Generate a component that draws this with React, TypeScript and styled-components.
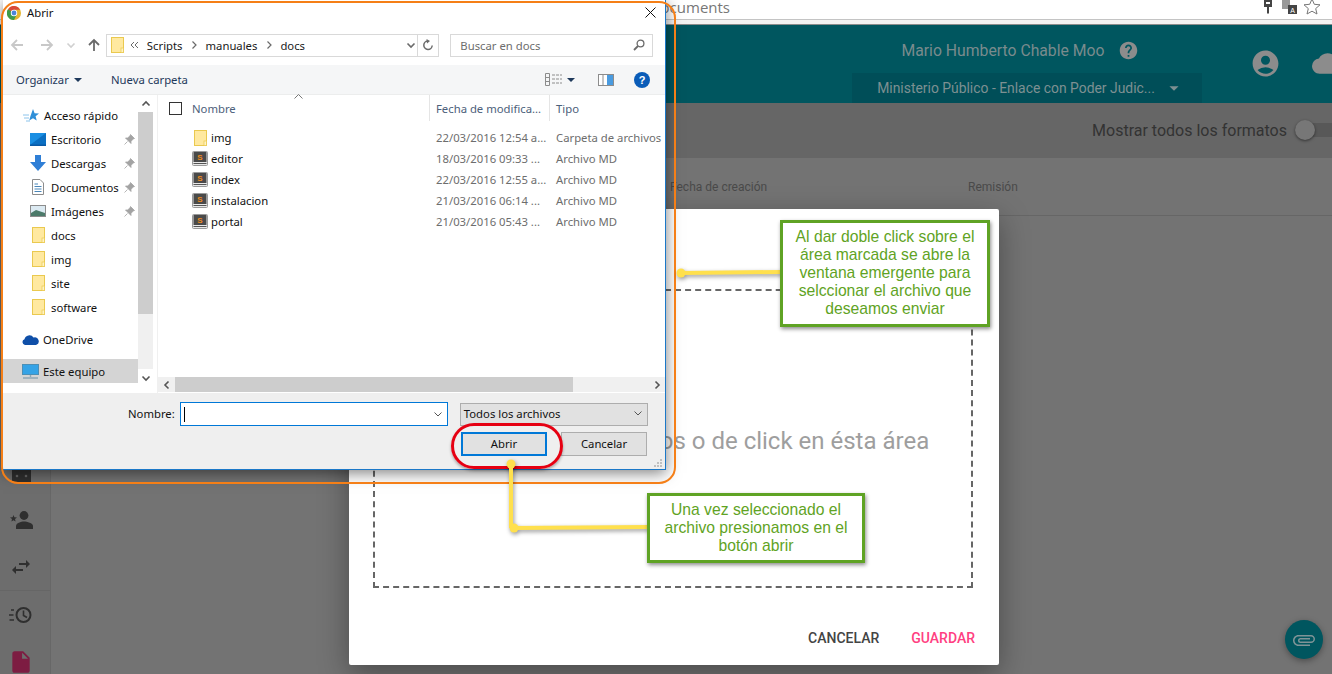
import styled, { createGlobalStyle } from "styled-components";
import {
  MdAccountCircle,
  MdArrowDropDown,
  MdAttachFile,
  MdCloud,
  MdHelp,
  MdInsertDriveFile,
  MdSwapHoriz,
} from "react-icons/md";

const GlobalStyle = createGlobalStyle`
  html, body { margin: 0; padding: 0; background: #737373; }
  * { box-sizing: border-box; }
`;

const Page = styled.div`
  position: relative;
  width: 1332px;
  height: 674px;
  overflow: hidden;
  display: flex;
  flex-direction: column;
  font-family: Roboto, sans-serif;
  background: #737373;
`;

/* browser chrome behind everything */
const BrowserBar = styled.div`
  height: 25px;
  flex: none;
  background: #f2f2f2;
  border-bottom: 1px solid #8c8c8c;
`;
const AddressBox = styled.div`
  height: 20px;
  background: #fff;
  border-bottom: 1px solid #c4c4c4;
  display: flex;
  align-items: center;
  padding-right: 11px;
`;
const AddressText = styled.span`
  width: 730px;
  text-align: right;
  font: 15px "Open Sans", sans-serif;
  color: #777;
  margin-top: -6px;
  white-space: nowrap;
`;
const AddressIcons = styled.div`
  margin-left: auto;
  display: flex;
  align-items: center;
  gap: 6px;
  margin-top: -6px;
`;
const KeyIcon = styled.svg`
  margin-right: 3px;
`;

const AppHeader = styled.header`
  height: 78px;
  flex: none;
  background: #00565f;
  display: flex;
  justify-content: flex-end;
  overflow: hidden;
`;
const UserBlock = styled.div`
  width: 350px;
  display: flex;
  flex-direction: column;
  align-items: center;
`;
const UserName = styled.div`
  height: 48px;
  padding: 3px 14px 0 0;
  display: flex;
  align-items: center;
  gap: 13px;
  font-size: 15.75px;
  color: #7a8b8d;
`;
const RoleSelect = styled.div`
  width: 350px;
  height: 30px;
  padding-left: 8px;
  background: #004e58;
  display: flex;
  align-items: center;
  justify-content: center;
  gap: 8px;
  font-size: 13.9px;
  color: #7d9092;
`;
const HeaderIcons = styled.div`
  width: 130px;
  padding: 23px 0 0 48px;
  display: flex;
  gap: 31px;
  color: #8c8c8c;
  flex: none;
  svg {
    flex: none;
  }
`;

const Toolbar = styled.div`
  height: 55px;
  flex: none;
  background: #666;
  display: flex;
  align-items: center;
  justify-content: flex-end;
  gap: 8px;
  font-size: 16px;
  color: #333;
`;
const Toggle = styled.div`
  position: relative;
  width: 37px;
  height: 14px;
  margin-top: -2px;
  border-radius: 7px 0 0 7px;
  background: #585858;
`;
const ToggleKnob = styled.span`
  position: absolute;
  left: 0;
  top: -3px;
  width: 20px;
  height: 20px;
  border-radius: 50%;
  background: #777;
  box-shadow: 0 1px 3px rgba(0, 0, 0, 0.5);
`;

const Body = styled.div`
  flex: 1;
  display: flex;
  min-height: 0;
`;
const SideRail = styled.nav`
  width: 51px;
  flex: none;
  background: #6d6d6d;
  border-right: 1px solid #676767;
  padding: 291px 8px 0 0;
  display: flex;
  flex-direction: column;
  color: #2f2f2f;
`;
const RailItem = styled.div<{ $color?: string }>`
  height: 47px;
  flex: none;
  display: flex;
  align-items: center;
  justify-content: center;
  color: ${(p) => p.$color || "#2f2f2f"};
`;
const RailDivider = styled.div`
  height: 1px;
  flex: none;
  margin-right: -8px;
  background: #666;
`;
const Content = styled.main`
  flex: 1;
`;
const TableHead = styled.div`
  height: 58px;
  background: #737373;
  border-bottom: 1px solid #666;
  display: grid;
  grid-template-columns: 298px 1fr;
  padding-left: 619px;
  align-items: center;
  font-size: 12px;
  color: #4a4a4a;
`;

/* upload modal */
const Modal = styled.section`
  position: absolute;
  left: 349px;
  top: 209px;
  width: 650px;
  height: 456px;
  background: #fff;
  border-radius: 2px;
  box-shadow: 0 10px 30px rgba(0, 0, 0, 0.35);
  padding: 80px 26px 0 24px;
  display: flex;
  flex-direction: column;
`;
const DropZone = styled.div`
  height: 299px;
  border: 2px dashed #666;
  display: flex;
  align-items: center;
  justify-content: center;
  font-size: 24px;
  color: #9e9e9e;
  padding: 4px 0 0 0;
  white-space: nowrap;
`;
const ModalFooter = styled.div`
  flex: 1;
  display: flex;
  justify-content: flex-end;
  align-items: center;
  gap: 32px;
  padding-top: 23px;
  margin-right: -2px;
  font-size: 14px;
  font-weight: 500;
`;
const FlatButton = styled.span<{ $color: string }>`
  color: ${(p) => p.$color};
`;
const Fab = styled.div`
  position: absolute;
  left: 1285px;
  top: 620px;
  width: 38px;
  height: 39px;
  border-radius: 50%;
  background: #00565f;
  box-shadow: 0 2px 6px rgba(0, 0, 0, 0.35);
  display: flex;
  align-items: center;
  justify-content: center;
  color: #7f9497;
`;

/* native file dialog */
const Dialog = styled.div`
  position: absolute;
  left: 3px;
  top: 0;
  width: 663px;
  height: 470px;
  background: #fff;
  border-right: 1px solid #1b78c8;
  border-bottom: 1px solid #1b78c8;
  box-shadow: 0 3px 14px rgba(0, 0, 0, 0.5);
  display: flex;
  flex-direction: column;
  font-family: "Noto Sans", sans-serif;
  font-size: 11.3px;
  color: #111;
`;
const TitleRow = styled.div`
  height: 25px;
  flex: none;
  display: flex;
  align-items: center;
  padding: 0 9px 0 4px;
  gap: 6px;
`;
const TitleClose = styled.div`
  margin-left: auto;
  display: flex;
`;
const NavRow = styled.div`
  height: 40px;
  flex: none;
  display: flex;
  align-items: center;
  padding: 0 12px 0 7px;
`;
const NavButtons = styled.div`
  width: 96px;
  display: flex;
  align-items: center;
  color: #c8c8c8;
`;
const NavSpace = styled.span<{ $w: number }>`
  width: ${(p) => p.$w}px;
`;
const Field = styled.div`
  height: 23px;
  border: 1px solid #d9d9d9;
  display: flex;
  align-items: center;
`;
const PathField = styled(Field)`
  width: 334px;
  padding-left: 4px;
`;
const Crumb = styled.span`
  color: #1a1a1a;
`;
const CrumbSep = styled.span`
  width: 23px;
  display: flex;
  justify-content: center;
`;
const PathTail = styled.div`
  margin-left: auto;
  width: 34px;
  height: 100%;
  display: flex;
  align-items: center;
`;
const TailDrop = styled.div`
  width: 13px;
  display: flex;
  justify-content: center;
`;
const TailRefresh = styled.div`
  flex: 1;
  height: 100%;
  border-left: 1px solid #d9d9d9;
  display: flex;
  align-items: center;
  justify-content: center;
`;
const SearchField = styled(Field)`
  width: 203px;
  margin-left: 11px;
  padding: 0 7px 0 9px;
  justify-content: space-between;
  color: #6d6d6d;
`;
const CommandRow = styled.div`
  height: 30px;
  flex: none;
  background: #f5f6f7;
  display: flex;
  align-items: center;
  padding: 0 15px 0 13px;
  color: #1e395b;
  border-bottom: 1px solid #eceded;
`;
const Organize = styled.span`
  width: 95px;
  display: flex;
  align-items: center;
  gap: 5px;
`;
const CommandIcons = styled.div`
  margin-left: auto;
  display: flex;
  align-items: center;
`;
const PaneToggle = styled.svg`
  margin-left: 14px;
`;
const HelpBadge = styled.svg`
  margin-left: 20px;
`;
const Caret = styled.span<{ $gap: number }>`
  width: 0;
  height: 0;
  border-left: 4px solid transparent;
  border-right: 4px solid transparent;
  border-top: 4px solid #1e395b;
  margin: 0 ${(p) => p.$gap}px 0 ${(p) => p.$gap - 4}px;
`;
const Panes = styled.div`
  height: 298px;
  flex: none;
  display: flex;
`;
const NavPane = styled.div`
  width: 135px;
  flex: none;
  padding-top: 8px;
  display: flex;
  flex-direction: column;
`;
const NavItem = styled.div<{ $indent: number; $top?: number; $active?: boolean }>`
  height: 24px;
  flex: none;
  margin-top: ${(p) => p.$top || 0}px;
  padding-left: ${(p) => p.$indent}px;
  display: flex;
  align-items: center;
  gap: 4px;
  background: ${(p) => (p.$active ? "#d4d4d4" : "transparent")};
`;
const NavIcon = styled.span`
  width: 18px;
  height: 18px;
  flex: none;
  display: flex;
  align-items: center;
  justify-content: center;
`;
const Pin = styled.span`
  margin-left: auto;
  margin-right: 3px;
  display: flex;
`;
const ScrollY = styled.div`
  width: 15px;
  flex: none;
  background: #f0f0f0;
  display: flex;
  flex-direction: column;
  margin-bottom: 7px;
`;
const ScrollBtn = styled.div`
  height: 17px;
  flex: none;
  display: flex;
  align-items: center;
  justify-content: center;
  background: #fff;
`;
const ScrollThumbY = styled.div`
  height: 202px;
  background: #cdcdcd;
`;
const ScrollSpace = styled.div`
  flex: 1;
`;
const FilePane = styled.div`
  flex: 1;
  min-width: 0;
  margin-left: 4px;
  border-left: 1px solid #f0f0f0;
  display: flex;
  flex-direction: column;
`;
const Grid = styled.div`
  display: grid;
  grid-template-columns: 271px 120px 1fr;
`;
const ColHead = styled(Grid)`
  height: 26px;
  flex: none;
  align-items: center;
  color: #4c607a;
`;
const HeadCell = styled.div<{ $sep?: boolean }>`
  position: relative;
  height: 26px;
  display: flex;
  align-items: center;
  padding-left: ${(p) => (p.$sep ? 6 : 11)}px;
  border-left: ${(p) => (p.$sep ? "1px solid #e5e5e5" : "0")};
  gap: 10px;
`;
const Check = styled.span`
  width: 13px;
  height: 13px;
  border: 1px solid #333;
  background: #fff;
`;
const SortMark = styled.span`
  position: absolute;
  left: 136px;
  top: -1px;
  display: flex;
`;
const FileRows = styled.div`
  flex: 1;
  padding-top: 6px;
`;
const FileRow = styled(Grid)`
  height: 21px;
  align-items: center;
`;
const NameCell = styled.div`
  display: flex;
  align-items: center;
  gap: 2px;
  padding-left: 33px;
`;
const FileIcon = styled.span`
  width: 18px;
  display: flex;
  justify-content: center;
`;
const MetaCell = styled.div`
  color: #6d6d6d;
  padding-left: 7px;
  white-space: nowrap;
`;
const ScrollX = styled.div`
  height: 15px;
  flex: none;
  margin-bottom: 1px;
  display: flex;
  background: #f0f0f0;
`;
const ScrollXBtn = styled.div`
  width: 17px;
  display: flex;
  align-items: center;
  justify-content: center;
`;
const ScrollThumbX = styled.div`
  width: 398px;
  background: #cdcdcd;
`;
const BottomArea = styled.div`
  position: relative;
  flex: 1;
  background: #efefef;
  padding: 9px 17px 0 125px;
  display: flex;
  flex-direction: column;
  gap: 6px;
`;
const FormRow = styled.div`
  display: flex;
  align-items: center;
`;
const FormLabel = styled.span`
  margin-top: -2px;
`;
const NameInput = styled.div`
  width: 268px;
  height: 24px;
  margin-left: 5px;
  background: #fff;
  border: 1px solid #0078d7;
  display: flex;
  align-items: center;
  justify-content: space-between;
  padding: 0 4px 0 3px;
`;
const Cursor = styled.span`
  width: 1px;
  height: 15px;
  background: #000;
`;
const TypeSelect = styled.div`
  width: 188px;
  height: 23px;
  margin-left: 12px;
  background: #e1e1e1;
  border: 1px solid #adadad;
  display: flex;
  align-items: center;
  justify-content: space-between;
  padding: 0 4px 2px 3px;
`;
const ButtonRow = styled.div`
  display: flex;
  justify-content: flex-end;
  gap: 14px;
  margin-right: 1px;
`;
const DialogButton = styled.div<{ $primary?: boolean }>`
  width: 86px;
  height: 24px;
  padding-bottom: 2px;
  background: #e1e1e1;
  border: ${(p) => (p.$primary ? "2px solid #0078d7" : "1px solid #adadad")};
  display: flex;
  align-items: center;
  justify-content: center;
`;
const Grip = styled.svg`
  position: absolute;
  right: 3px;
  bottom: 2px;
`;

/* annotations over the screenshot */
const OrangeFrame = styled.div`
  position: absolute;
  left: 1px;
  top: 1px;
  width: 675px;
  height: 483px;
  border: 2px solid #f57f17;
  border-radius: 17px;
`;
const RedPill = styled.div`
  position: absolute;
  left: 451px;
  top: 423px;
  width: 112px;
  height: 46px;
  border: 3px solid #e60012;
  border-radius: 23px;
  box-shadow: 0 2px 3px rgba(0, 0, 0, 0.3);
`;
const Connectors = styled.svg`
  position: absolute;
  left: 0;
  top: 0;
  filter: drop-shadow(1px 2px 2px rgba(0, 0, 0, 0.4));
`;
const Callout = styled.div<{ $x: number; $y: number; $w: number; $h: number; $lift: number }>`
  position: absolute;
  left: ${(p) => p.$x}px;
  top: ${(p) => p.$y}px;
  width: ${(p) => p.$w}px;
  height: ${(p) => p.$h}px;
  padding-bottom: ${(p) => p.$lift}px;
  background: #fff;
  border: 3px solid #5fa324;
  box-shadow: 1px 2px 4px rgba(0, 0, 0, 0.45);
  display: flex;
  align-items: center;
  justify-content: center;
  text-align: center;
  font: 15.7px/18px "Liberation Sans", Arial, sans-serif;
  color: #5fa324;
`;

const FolderIcon = () => (
  <svg width="13" height="16" viewBox="0 0 13 16">
    <rect x="0.5" y="0.5" width="12" height="15" fill="#ffe9a0" stroke="#eac94f" />
    <rect x="10" y="11" width="2.5" height="4.5" fill="#fff3c4" stroke="#eac94f" strokeWidth="0.7" />
  </svg>
);

const SublimeIcon = () => (
  <svg width="16" height="15" viewBox="0 0 16 15">
    <rect x="0.5" y="0.5" width="15" height="14" rx="1" fill="#e8e8e8" stroke="#9a9a9a" />
    <rect x="1.5" y="1" width="13" height="10" fill="#4a4a4a" />
    <text x="8" y="9" fontSize="8" fontWeight="700" textAnchor="middle" fill="#f08a1d" fontFamily="Liberation Sans">
      S
    </text>
    <rect x="1.5" y="12" width="13" height="1" fill="#555" />
  </svg>
);

const ChromeIcon = () => (
  <svg width="14" height="14" viewBox="0 0 14 14">
    <circle cx="7" cy="7" r="7" fill="#e4b52e" />
    <path d="M7 7 L1 3.2 A7 7 0 0 1 13.2 3.8 L7 3.8 Z" fill="#d9493a" />
    <path d="M7 7 L1 3.2 A7 7 0 0 0 7 14 L9.5 9 Z" fill="#3d9a4a" />
    <circle cx="7" cy="7" r="3.2" fill="#fff" />
    <circle cx="7" cy="7" r="2.4" fill="#4a84d8" />
  </svg>
);

const PinIcon = () => (
  <svg width="11" height="11" viewBox="0 0 11 11">
    <path d="M6.5 0.5 L10.5 4.5 L9 5 L7 7.5 L7 9.5 L1.5 4 L3.5 4 L6 2 Z M3.5 7.5 L0.5 10.5" fill="#a3a3a3" stroke="#a3a3a3" strokeWidth="0.8" />
  </svg>
);

const Chevron = ({ dir, color = "#6a6a6a", width = 1.6 }: { dir: "up" | "down" | "left" | "right"; color?: string; width?: number }) => {
  const d = {
    up: "M1.5 6.5 L5 3 L8.5 6.5",
    down: "M1.5 3.5 L5 7 L8.5 3.5",
    left: "M6.5 1.5 L3 5 L6.5 8.5",
    right: "M3.5 1.5 L7 5 L3.5 8.5",
  }[dir];
  return (
    <svg width="10" height="10" viewBox="0 0 10 10">
      <path d={d} fill="none" stroke={color} strokeWidth={width} />
    </svg>
  );
};

const Arrow = ({ rotate, color }: { rotate: number; color: string }) => (
  <svg width="14" height="14" viewBox="0 0 14 14" transform={`rotate(${rotate})`}>
    <path d="M13 7 H2 M7 2 L2 7 L7 12" fill="none" stroke={color} strokeWidth="1.8" />
  </svg>
);

const quickAccess = [
  {
    name: "Escritorio",
    pin: true,
    icon: (
      <svg width="16" height="13" viewBox="0 0 16 13">
        <rect width="16" height="12" fill="#1a8fe3" />
        <path d="M0 12 L16 0 V12 Z" fill="#0b6fc2" />
        <rect y="11.5" width="16" height="1.5" fill="#0a5aa5" />
      </svg>
    ),
  },
  {
    name: "Descargas",
    pin: true,
    icon: (
      <svg width="16" height="16" viewBox="0 0 16 16">
        <path d="M5 0 H11 V7 H16 L8 16 L0 7 H5 Z" fill="#2f7fd6" />
      </svg>
    ),
  },
  {
    name: "Documentos",
    pin: true,
    icon: (
      <svg width="12" height="16" viewBox="0 0 12 16">
        <path d="M0.5 0.5 H8 L11.5 4 V15.5 H0.5 Z" fill="#fff" stroke="#8c8c8c" />
        <path d="M2.5 5 H6 M2.5 7.5 H9.5 M2.5 10 H9.5 M2.5 12.5 H9.5" stroke="#4a86b8" />
      </svg>
    ),
  },
  {
    name: "Imágenes",
    pin: true,
    icon: (
      <svg width="16" height="12" viewBox="0 0 16 12">
        <rect x="0.5" y="0.5" width="15" height="11" fill="#dceaf2" stroke="#8c8c8c" />
        <path d="M1 8 L6 5 L15 8 V11 H1 Z" fill="#4c7a6a" />
      </svg>
    ),
  },
  { name: "docs", icon: <FolderIcon /> },
  { name: "img", icon: <FolderIcon /> },
  { name: "site", icon: <FolderIcon /> },
  { name: "software", icon: <FolderIcon /> },
];

const files = [
  { name: "img", date: "22/03/2016 12:54 a...", type: "Carpeta de archivos", folder: true },
  { name: "editor", date: "18/03/2016 09:33 ...", type: "Archivo MD" },
  { name: "index", date: "22/03/2016 12:55 a...", type: "Archivo MD" },
  { name: "instalacion", date: "21/03/2016 06:14 ...", type: "Archivo MD" },
  { name: "portal", date: "21/03/2016 05:43 ...", type: "Archivo MD" },
];

export default function App() {
  return (
    <Page>
      <GlobalStyle />
      <BrowserBar>
        <AddressBox>
          <AddressText>Documents</AddressText>
          <AddressIcons>
            <KeyIcon width="10" height="14" viewBox="0 0 10 14">
              <path d="M1 0 H9 V7 H6 V13 L5 14 L4 13 V7 H1 Z" fill="#444" />
              <rect x="3" y="2" width="4" height="2" fill="#fff" />
            </KeyIcon>
            <svg width="15" height="14" viewBox="0 0 15 14">
              <rect width="8" height="9" fill="#999" />
              <rect x="6" y="5" width="9" height="9" fill="#444" />
              <text x="10.5" y="12.5" fontSize="7" textAnchor="middle" fill="#fff" fontFamily="Liberation Sans">A</text>
            </svg>
            <svg width="18" height="17" viewBox="0 0 18 17">
              <path d="M9 1 L11.3 6.3 L17 6.8 L12.7 10.6 L14 16 L9 13.2 L4 16 L5.3 10.6 L1 6.8 L6.7 6.3 Z" fill="#fff" stroke="#777" />
            </svg>
          </AddressIcons>
        </AddressBox>
      </BrowserBar>

      <AppHeader>
        <UserBlock>
          <UserName>
            Mario Humberto Chable Moo
            <MdHelp size={21} color="#8c8c8c" />
          </UserName>
          <RoleSelect>
            Ministerio Público - Enlace con Poder Judic...
            <MdArrowDropDown size={22} />
          </RoleSelect>
        </UserBlock>
        <HeaderIcons>
          <MdAccountCircle size={31} />
          <MdCloud size={31} />
        </HeaderIcons>
      </AppHeader>

      <Toolbar>
        Mostrar todos los formatos
        <Toggle>
          <ToggleKnob />
        </Toggle>
      </Toolbar>

      <Body>
        <SideRail>
          <RailItem>
            <svg width="19" height="18" viewBox="0 0 19 18">
              <path d="M0 0 H19 V18 H0 Z" fill="#2f2f2f" />
              <circle cx="5" cy="12" r="1.3" fill="#666" />
              <circle cx="14" cy="12" r="1.3" fill="#666" />
            </svg>
          </RailItem>
          <RailItem>
            <svg width="23" height="18" viewBox="0 0 23 18">
              <circle cx="14" cy="4.5" r="4.4" fill="#2f2f2f" />
              <path d="M6 18 V15 C6 12 11 10.5 14 10.5 C17 10.5 23 12 23 15 V18 Z" fill="#2f2f2f" />
              <path d="M3.5 4 L4.4 6.3 L7 6.5 L5 8 L5.6 10.5 L3.5 9.2 L1.4 10.5 L2 8 L0 6.5 L2.6 6.3 Z" fill="#2f2f2f" />
            </svg>
          </RailItem>
          <RailItem>
            <MdSwapHoriz size={24} />
          </RailItem>
          <RailDivider />
          <RailItem>
            <svg width="24" height="18" viewBox="0 0 24 18">
              <circle cx="14.5" cy="9" r="7" fill="none" stroke="#2f2f2f" strokeWidth="2" />
              <path d="M14.5 4.5 V9.5 L18 11.5" fill="none" stroke="#2f2f2f" strokeWidth="1.6" />
              <path d="M2 4 H5 M0 9 H4.5 M0.5 14 H5" stroke="#2f2f2f" strokeWidth="1.6" />
            </svg>
          </RailItem>
          <RailItem $color="#7d1c42">
            <MdInsertDriveFile size={26} />
          </RailItem>
        </SideRail>
        <Content>
          <TableHead>
            <span>Fecha de creación</span>
            <span>Remisión</span>
          </TableHead>
        </Content>
      </Body>

      <Modal>
        <DropZone>Arrastre sus documentos o de click en ésta área</DropZone>
        <ModalFooter>
          <FlatButton $color="#444">CANCELAR</FlatButton>
          <FlatButton $color="#ff4081">GUARDAR</FlatButton>
        </ModalFooter>
      </Modal>

      <Fab>
        <MdAttachFile size={24} transform="rotate(90)" />
      </Fab>

      <Dialog>
        <TitleRow>
          <ChromeIcon />
          Abrir
          <TitleClose>
            <svg width="11" height="11" viewBox="0 0 11 11">
              <path d="M0.5 0.5 L10.5 10.5 M10.5 0.5 L0.5 10.5" stroke="#111" strokeWidth="1" />
            </svg>
          </TitleClose>
        </TitleRow>
        <NavRow>
          <NavButtons>
            <Arrow rotate={0} color="#c8c8c8" />
            <NavSpace $w={16} />
            <Arrow rotate={180} color="#c8c8c8" />
            <NavSpace $w={12} />
            <Chevron dir="down" color="#d0d0d0" />
            <NavSpace $w={11} />
            <Arrow rotate={90} color="#6a6a6a" />
          </NavButtons>
          <PathField>
            <FolderIcon />
            <CrumbSep>
              <svg width="10" height="8" viewBox="0 0 10 8">
                <path d="M4 1 L1 4 L4 7 M8 1 L5 4 L8 7" fill="none" stroke="#6a6a6a" />
              </svg>
            </CrumbSep>
            <Crumb>Scripts</Crumb>
            <CrumbSep>
              <Chevron dir="right" width={1.2} />
            </CrumbSep>
            <Crumb>manuales</Crumb>
            <CrumbSep>
              <Chevron dir="right" width={1.2} />
            </CrumbSep>
            <Crumb>docs</Crumb>
            <PathTail>
              <TailDrop>
                <Chevron dir="down" />
              </TailDrop>
              <TailRefresh>
                <svg width="12" height="12" viewBox="0 0 12 12">
                  <path d="M6 2 A4.2 4.2 0 1 0 10.2 6.5" fill="none" stroke="#6a6a6a" strokeWidth="1.5" />
                  <path d="M4.5 0 L8 2 L5 4.5 Z" fill="#6a6a6a" />
                </svg>
              </TailRefresh>
            </PathTail>
          </PathField>
          <SearchField>
            Buscar en docs
            <svg width="12" height="12" viewBox="0 0 12 12">
              <circle cx="7.5" cy="4.5" r="3.4" fill="none" stroke="#6a6a6a" strokeWidth="1.3" />
              <path d="M5 7 L1 11" stroke="#6a6a6a" strokeWidth="1.8" />
            </svg>
          </SearchField>
        </NavRow>
        <CommandRow>
          <Organize>
            Organizar
            <Caret $gap={4} />
          </Organize>
          Nueva carpeta
          <CommandIcons>
            <svg width="17" height="13" viewBox="0 0 17 13">
              <path d="M0.5 0.5 H4.5 V12.5 H0.5 Z M0.5 4.5 H4.5 M0.5 8.5 H4.5" fill="none" stroke="#8c8c8c" />
              <path d="M7 2 H17 M7 6 H17 M7 10 H17" stroke="#8c8c8c" strokeDasharray="3 1" />
            </svg>
            <Caret $gap={9} />
            <PaneToggle width="16" height="12" viewBox="0 0 16 12">
              <rect x="0.5" y="0.5" width="15" height="11" fill="#fff" stroke="#8c8c8c" />
              <rect x="9" y="1" width="6" height="10" fill="#4a9be0" />
              <path d="M5 1 V11" stroke="#8c8c8c" />
            </PaneToggle>
            <HelpBadge width="16" height="16" viewBox="0 0 16 16">
              <circle cx="8" cy="8" r="8" fill="#0a5cb8" />
              <text x="8" y="12" fontSize="11" fontWeight="700" textAnchor="middle" fill="#fff" fontFamily="Liberation Sans">?</text>
            </HelpBadge>
          </CommandIcons>
        </CommandRow>
        <Panes>
          <NavPane>
            <NavItem $indent={19}>
              <NavIcon>
                <svg width="16" height="15" viewBox="0 0 16 15">
                  <path d="M10 1 L11.6 5.2 L16 5.5 L12.6 8.3 L13.7 12.6 L10 10.2 L6.3 12.6 L7.4 8.3 Z" fill="#2f8fd8" />
                  <path d="M0 7 H6 M1 10 H6 M3 13 H7" stroke="#8cc4ec" />
                </svg>
              </NavIcon>
              Acceso rápido
            </NavItem>
            {quickAccess.map((item) => (
              <NavItem key={item.name} $indent={26}>
                <NavIcon>{item.icon}</NavIcon>
                {item.name}
                {item.pin && (
                  <Pin>
                    <PinIcon />
                  </Pin>
                )}
              </NavItem>
            ))}
            <NavItem $indent={18} $top={8}>
              <NavIcon>
                <svg width="17" height="11" viewBox="0 0 17 11">
                  <path d="M3 11 A3 3 0 0 1 2.5 5.2 A5 5 0 0 1 11.5 3.5 A3.6 3.6 0 0 1 14 11 Z" fill="#0f4fa8" />
                </svg>
              </NavIcon>
              OneDrive
            </NavItem>
            <NavItem $indent={18} $top={8} $active>
              <NavIcon>
                <svg width="17" height="15" viewBox="0 0 17 15">
                  <rect x="0.5" y="0.5" width="16" height="10" fill="#35a3e6" stroke="#4d8fb5" />
                  <path d="M8.5 11 V13 M1 14 H16" stroke="#8fa7b5" strokeWidth="1.4" />
                </svg>
              </NavIcon>
              Este equipo
            </NavItem>
          </NavPane>
          <ScrollY>
            <ScrollBtn>
              <Chevron dir="up" color="#555" />
            </ScrollBtn>
            <ScrollThumbY />
            <ScrollSpace />
            <ScrollBtn>
              <Chevron dir="down" color="#555" />
            </ScrollBtn>
          </ScrollY>
          <FilePane>
            <ColHead>
              <HeadCell>
                <Check />
                Nombre
                <SortMark>
                  <svg width="9" height="5" viewBox="0 0 9 5">
                    <path d="M0.5 4.5 L4.5 0.5 L8.5 4.5" fill="none" stroke="#777" />
                  </svg>
                </SortMark>
              </HeadCell>
              <HeadCell $sep>Fecha de modifica...</HeadCell>
              <HeadCell $sep>Tipo</HeadCell>
            </ColHead>
            <FileRows>
              {files.map((f) => (
                <FileRow key={f.name}>
                  <NameCell>
                    <FileIcon>{f.folder ? <FolderIcon /> : <SublimeIcon />}</FileIcon>
                    {f.name}
                  </NameCell>
                  <MetaCell>{f.date}</MetaCell>
                  <MetaCell>{f.type}</MetaCell>
                </FileRow>
              ))}
            </FileRows>
            <ScrollX>
              <ScrollXBtn>
                <Chevron dir="left" color="#555" />
              </ScrollXBtn>
              <ScrollThumbX />
              <ScrollSpace />
              <ScrollXBtn>
                <Chevron dir="right" color="#555" />
              </ScrollXBtn>
            </ScrollX>
          </FilePane>
        </Panes>
        <BottomArea>
          <FormRow>
            <FormLabel>Nombre:</FormLabel>
            <NameInput>
              <Cursor />
              <Chevron dir="down" color="#555" width={1} />
            </NameInput>
            <TypeSelect>
              Todos los archivos
              <Chevron dir="down" color="#555" width={1} />
            </TypeSelect>
          </FormRow>
          <ButtonRow>
            <DialogButton $primary>Abrir</DialogButton>
            <DialogButton>Cancelar</DialogButton>
          </ButtonRow>
          <Grip width="8" height="8" viewBox="0 0 8 8">
            <path d="M6 0h2v2H6z M3 3h2v2H3z M6 3h2v2H6z M0 6h2v2H0z M3 6h2v2H3z M6 6h2v2H6z" fill="#c0c0c0" />
          </Grip>
        </BottomArea>
      </Dialog>

      <OrangeFrame />
      <RedPill />
      <Connectors width="1332" height="674" viewBox="0 0 1332 674">
        <g fill="none" stroke="#ffe04d" strokeWidth="4">
          <path d="M681 273 L782 272" />
          <path d="M511 464 V528 M514 528 L649 527" />
        </g>
        <g fill="#ffe04d">
          <circle cx="681" cy="273" r="4.5" />
          <circle cx="511" cy="464" r="4.5" />
          <circle cx="514" cy="528" r="4.5" />
        </g>
      </Connectors>
      <Callout $x={780} $y={220} $w={210} $h={107} $lift={2}>
        Al dar doble click sobre el
        <br />
        área marcada se abre la
        <br />
        ventana emergente para
        <br />
        selccionar el archivo que
        <br />
        deseamos enviar
      </Callout>
      <Callout $x={647} $y={493} $w={218} $h={70} $lift={1}>
        Una vez seleccionado el
        <br />
        archivo presionamos en el
        <br />
        botón abrir
      </Callout>
    </Page>
  );
}
